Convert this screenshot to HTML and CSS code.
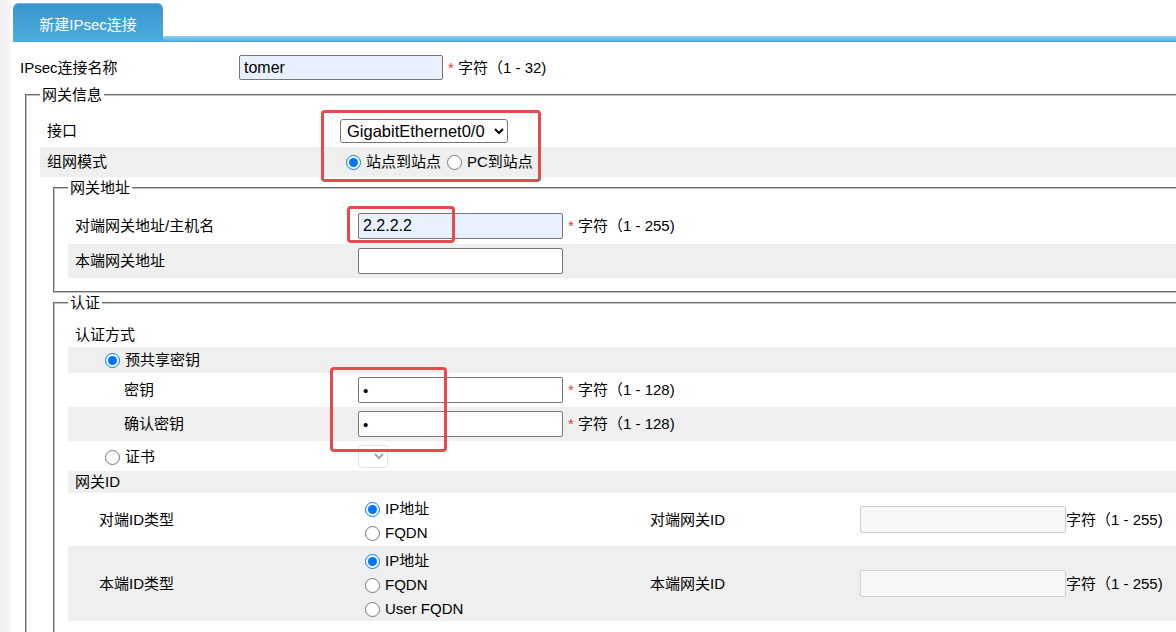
FILE: index.html
```html
<!DOCTYPE html>
<html lang="zh-CN">
<head>
<meta charset="utf-8">
<title>新建IPsec连接</title>
<link rel="stylesheet" href="styles.css">
</head>
<body>
<div class="page">
  <aside class="side"></aside>
  <main class="main">
    <div class="tabbar">
      <div class="tab">新建IPsec连接</div>
      <div class="tabline"></div>
    </div>

    <div class="namerow">
      <span class="name-label">IPsec连接名称</span>
      <input class="inp inp-name filled" type="text" value="tomer">
      <span class="hint"><span class="req">*</span> 字符（1 - 32)</span>
    </div>

    <fieldset class="fs fs-outer">
      <legend>网关信息</legend>
      <div class="row r-iface">
        <span class="lbl lbl-o">接口</span>
        <select class="sel"><option>GigabitEthernet0/0</option></select>
      </div>
      <div class="row r-mode gray">
        <span class="lbl lbl-o">组网模式</span>
        <label class="radio radio-mode"><input type="radio" name="mode" checked>站点到站点</label>
        <label class="radio radio-mode"><input type="radio" name="mode">PC到站点</label>
      </div>

      <fieldset class="fs fs-inner fs-addr">
        <legend>网关地址</legend>
        <div class="row r-peer">
          <span class="lbl lbl-i">对端网关地址/主机名</span>
          <input class="inp inp-std filled" type="text" value="2.2.2.2">
          <span class="hint hint-gap"><span class="req">*</span> 字符（1 - 255)</span>
        </div>
        <div class="row r-local gray">
          <span class="lbl lbl-i">本端网关地址</span>
          <input class="inp inp-std" type="text" value="">
        </div>
      </fieldset>

      <fieldset class="fs fs-inner fs-auth">
        <legend>认证</legend>
        <div class="row r-method"><span class="lbl">认证方式</span></div>
        <div class="row r-psk gray">
          <label class="radio"><input type="radio" name="auth" checked>预共享密钥</label>
        </div>
        <div class="row r-key">
          <span class="lbl lbl-k">密钥</span>
          <input class="inp inp-std inp-pw" type="password" value="1">
          <span class="hint hint-gap"><span class="req">*</span> 字符（1 - 128)</span>
        </div>
        <div class="row r-key gray">
          <span class="lbl lbl-k">确认密钥</span>
          <input class="inp inp-std inp-pw" type="password" value="1">
          <span class="hint hint-gap"><span class="req">*</span> 字符（1 - 128)</span>
        </div>
        <div class="row r-cert">
          <label class="radio radio-cert"><input type="radio" name="auth">证书</label>
          <select class="sel-mini" disabled></select>
        </div>
        <div class="row r-gwid gray"><span class="lbl">网关ID</span></div>
        <div class="row r-idtype">
          <span class="lbl lbl-id">对端ID类型</span>
          <div class="idradios">
            <label class="radio radio-id"><input type="radio" name="peerid" checked>IP地址</label>
            <label class="radio radio-id"><input type="radio" name="peerid">FQDN</label>
          </div>
          <span class="lbl lbl-gw">对端网关ID</span>
          <input class="inp inp-id" type="text" disabled>
          <span class="hint">字符（1 - 255)</span>
        </div>
        <div class="row r-idtype r-localid gray">
          <span class="lbl lbl-id">本端ID类型</span>
          <div class="idradios">
            <label class="radio radio-id"><input type="radio" name="localid" checked>IP地址</label>
            <label class="radio radio-id"><input type="radio" name="localid">FQDN</label>
            <label class="radio radio-id"><input type="radio" name="localid">User FQDN</label>
          </div>
          <span class="lbl lbl-gw">本端网关ID</span>
          <input class="inp inp-id" type="text" disabled>
          <span class="hint">字符（1 - 255)</span>
        </div>
      </fieldset>
    </fieldset>
  </main>

  <div class="marks">
    <div class="mark m1"></div>
    <div class="mark m2"></div>
    <div class="mark m3"></div>
  </div>
</div>
</body>
</html>
```

FILE: styles.css
```css
* { box-sizing: border-box; }

html, body {
  margin: 0;
  padding: 0;
  overflow: hidden;
  background: #fff;
}

body {
  font-family: "Liberation Sans", "Noto Sans CJK SC", sans-serif;
  font-size: 15px;
  line-height: 18px;
  color: #000;
}

.page {
  position: relative;
  display: flex;
  width: 100%;
  height: 632px;
  overflow: hidden;
}

.side {
  flex: none;
  width: 11px;
  margin-right: 2px;
  background: linear-gradient(to right, #efefef, #f7f7f7);
}

.main {
  flex: 1;
  min-width: 0;
}

/* tab header */
.tabbar {
  display: flex;
  align-items: flex-end;
  height: 42px;
}

.tab {
  flex: none;
  width: 150px;
  height: 39px;
  padding-top: 5px;
  border-radius: 6px 6px 0 0;
  background: linear-gradient(#3995cc, #4badde);
  box-shadow: inset 0 1px 0 #6fb9e2;
  color: #fff;
  display: flex;
  align-items: center;
  justify-content: center;
}

.tabline {
  flex: 1;
  height: 6px;
  background: linear-gradient(#94d2ef, #4aa8da);
}

/* first row */
.namerow {
  display: flex;
  align-items: center;
  padding: 13px 0 6px 7px;
}

.name-label {
  flex: none;
  width: 219px;
}

/* inputs */
.inp {
  flex: none;
  height: 26px;
  padding: 0 4px;
  border: 1px solid #767676;
  border-radius: 2px;
  background: #fff;
  font-family: "Liberation Sans", sans-serif;
  font-size: 16px;
  color: #000;
  outline: none;
}

.inp.filled { background: #e8f0fe; }

.inp-name {
  width: 204px;
  height: 25px;
}

.inp-std { width: 205px; }

.inp-pw { font-size: 15px; }

.inp-id {
  width: 206px;
  height: 27px;
  border: 1px solid #cfcfcf;
  background: #f7f7f7;
}

.hint {
  flex: none;
  white-space: nowrap;
}

.namerow .hint,
.hint-gap { margin-left: 5px; }

.req { color: #e8383d; }

/* select */
.sel {
  flex: none;
  width: 168px;
  height: 24px;
  padding: 0 0 0 2px;
  border: 1px solid #767676;
  border-radius: 3px;
  background: #fff;
  font-family: "Liberation Sans", sans-serif;
  font-size: 16.5px;
  color: #000;
}

.sel-mini {
  flex: none;
  width: 30px;
  height: 23px;
  border: 1px solid #dcdcdc;
  border-radius: 3px;
  background: #fff;
}

/* fieldsets */
.fs {
  min-width: 0;
  margin: 0;
  padding: 11px 0 13px 13px;
  border: 2px groove #c0c0c0;
  border-right: none;
}

.fs legend {
  padding: 0 2px;
  line-height: 18px;
}

.fs-outer { margin-left: 12px; }

.fs-inner { margin: 2px 0 0 13px; }

.fs-auth { margin-top: 1px; }

/* rows */
.row {
  display: flex;
  align-items: center;
  padding-left: 7px;
}

.gray { background: #eeefee; }

.lbl { flex: none; white-space: nowrap; }
.lbl-o { width: 293px; }
.lbl-i { width: 283px; }
.lbl-k { width: 234px; }
.lbl-id { width: 266px; }
.lbl-gw { width: 210px; }

.r-iface { height: 32px; }
.r-mode { height: 30px; }
.r-peer { height: 36px; }
.r-local { height: 34px; }

.r-method { height: 24px; }
.r-psk { height: 26px; padding-left: 37px; }
.r-key { height: 34px; padding-left: 56px; }
.r-cert { height: 30px; padding-left: 37px; }
.r-gwid { height: 22px; }
.r-idtype { height: 53px; padding-left: 31px; }
.r-localid { height: 75px; }

/* radios */
.radio {
  display: inline-flex;
  align-items: center;
  white-space: nowrap;
}

.radio input {
  width: 15px;
  height: 15px;
  margin: 0 5px 0 0;
}

.radio-mode input { margin-left: 6px; }

.radio-cert {
  flex: none;
  width: 253px;
  padding-top: 2px;
}

.idradios {
  flex: none;
  width: 285px;
  display: flex;
  flex-direction: column;
  padding-top: 3px;
}

.radio-id { height: 24px; }

/* annotation boxes drawn over the screenshot */
.marks {
  position: absolute;
  left: 0;
  top: 0;
  pointer-events: none;
}

.mark {
  position: absolute;
  border: 3px solid #e8494f;
  border-radius: 4px;
}

.m1 { left: 321px; top: 110px; width: 220px; height: 72px; }
.m2 { left: 347px; top: 206px; width: 108px; height: 37px; }
.m3 { left: 330px; top: 367px; width: 117px; height: 85px; }
```
